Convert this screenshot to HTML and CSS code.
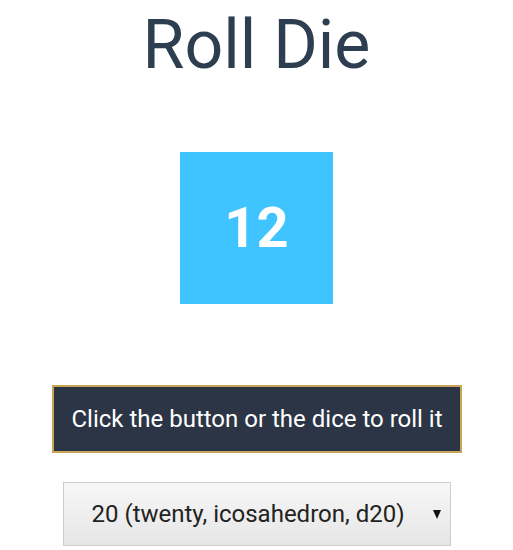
FILE: index.html
```html
<!DOCTYPE html>
<html lang="en">
<head>
<meta charset="utf-8">
<title>Roll Die</title>
<link rel="stylesheet" href="styles.css">
</head>
<body>
<main class="app">
  <h1 class="title">Roll Die</h1>
  <div class="die" role="button">12</div>
  <button class="roll">Click the button or the dice to roll it</button>
  <div class="select-wrap">
    <select class="sides">
      <option>20 (twenty, icosahedron, d20)</option>
    </select>
  </div>
</main>
</body>
</html>
```
FILE: styles.css
```css
html, body {
  margin: 0;
  padding: 0;
  background: #fff;
}
body {
  font-family: Roboto, "Liberation Sans", sans-serif;
}
.app {
  display: flex;
  flex-direction: column;
  align-items: center;
  width: 513px;
}
.title {
  margin: 0;
  padding-top: 3px;
  font-size: 68px;
  font-weight: 400;
  line-height: 84px;
  color: #2c3e50;
}
.die {
  margin-top: 65px;
  width: 153px;
  height: 152px;
  background: #40c4ff;
  color: #fff;
  font-size: 56px;
  font-weight: 700;
  display: flex;
  align-items: center;
  justify-content: center;
}
.roll {
  margin-top: 81px;
  margin-left: 1px;
  width: 410px;
  height: 68px;
  background: #2b3546;
  border: 2px solid #c9a55a;
  color: #fff;
  font-family: Roboto, "Liberation Sans", sans-serif;
  font-size: 24px;
  padding: 0;
}
.select-wrap {
  position: relative;
  margin-top: 29px;
  width: 388px;
  height: 64px;
}
.select-wrap::after {
  content: "";
  position: absolute;
  right: 10px;
  top: 28px;
  border-left: 4px solid transparent;
  border-right: 4px solid transparent;
  border-top: 9px solid #111;
}
.sides {
  appearance: none;
  -webkit-appearance: none;
  width: 100%;
  height: 100%;
  margin: 0;
  padding: 0 0 0 28px;
  border: 1px solid #cdcdcd;
  border-radius: 0;
  background: linear-gradient(#f7f7f7, #e6e6e6);
  color: #222;
  font-family: Roboto, "Liberation Sans", sans-serif;
  font-size: 24px;
}
```
